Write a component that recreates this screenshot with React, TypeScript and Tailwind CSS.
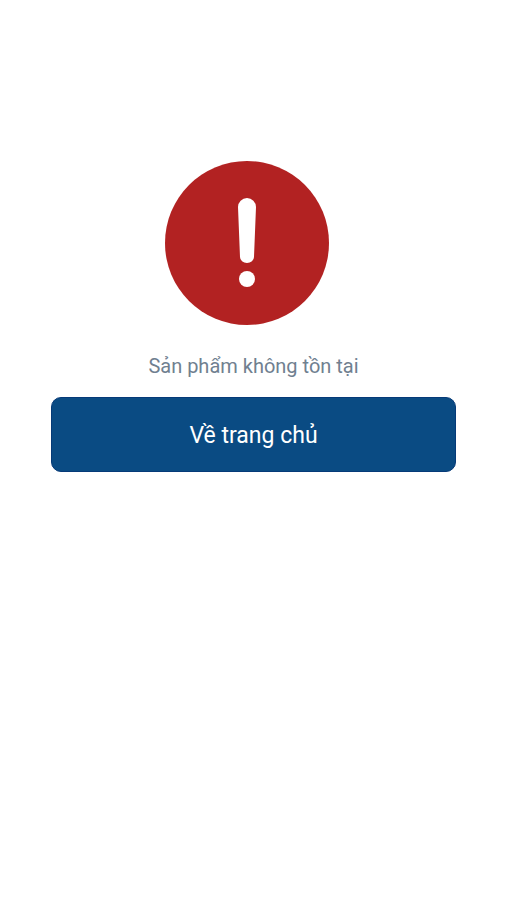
export default function App() {
  return (
    <main className="min-h-screen bg-white pt-40 pr-[50px] pl-[51px] font-[Roboto,sans-serif]">
      <svg className="mx-auto block h-[166px] w-[179px]" viewBox="0 0 179 166" aria-hidden="true">
        <circle cx="83" cy="83" r="82" fill="#b22222" />
        <path d="M74 47a9 9 0 0 1 18 0l-2 50a7 6 0 0 1-14 0z" fill="#fff" />
        <circle cx="83" cy="119" r="8" fill="#fff" />
      </svg>
      <p className="mt-7 text-center text-xl leading-6 text-[#708090]">Sản phẩm không tồn tại</p>
      <button type="button" className="mt-[19px] h-[75px] w-full rounded-[10px] border border-[#063a78] bg-[#0a4b83] pt-0.5 text-center text-[23px] leading-7 text-white">
        Về trang chủ
      </button>
    </main>
  );
}
